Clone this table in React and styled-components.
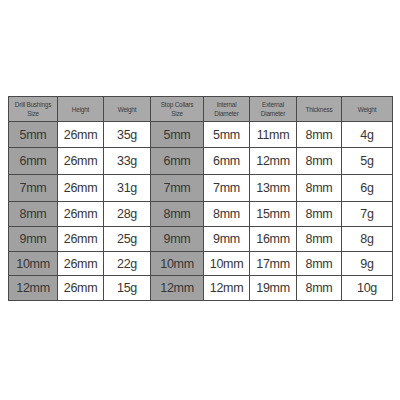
import React from 'react';
import styled, { createGlobalStyle } from 'styled-components';

const GlobalStyle = createGlobalStyle`
  html, body {
    margin: 0;
    padding: 0;
    background: #ffffff;
  }
  body {
    font-family: "Liberation Sans", Arial, sans-serif;
  }
`;

const Page = styled.div`
  width: 400px;
  height: 400px;
  padding: 96px 0 0 8px;
  box-sizing: border-box;
`;

const Table = styled.table`
  border-collapse: collapse;
  table-layout: fixed;
  width: 385px;
`;

const HeadCell = styled.th`
  background: #a9a9a9;
  border: 1px solid #4a4a4a;
  color: #3c3c3c;
  font-weight: normal;
  font-size: 6.4px;
  line-height: 9px;
  letter-spacing: -0.2px;
  text-align: center;
  height: 24px;
  padding: 0;
  width: ${(props) => props.w}px;
`;

const Cell = styled.td`
  background: ${(props) => (props.grey ? '#a1a1a1' : '#ffffff')};
  border: 1px solid #4a4a4a;
  color: #363636;
  font-size: 12.5px;
  text-align: center;
  padding: 0;
  height: ${(props) => props.h}px;
  letter-spacing: -0.3px;
`;

const headers = [
  { label: ['Drill Bushings', 'Size'], w: 48 },
  { label: ['Height'], w: 45 },
  { label: ['Weight'], w: 46 },
  { label: ['Stop Collars', 'Size'], w: 52 },
  { label: ['Internal', 'Diameter'], w: 45 },
  { label: ['External', 'Diameter'], w: 46 },
  { label: ['Thickness'], w: 44 },
  { label: ['Weight'], w: 50 },
];

const rows = [
  { h: 25, cells: ['5mm', '26mm', '35g', '5mm', '5mm', '11mm', '8mm', '4g'] },
  { h: 26, cells: ['6mm', '26mm', '33g', '6mm', '6mm', '12mm', '8mm', '5g'] },
  { h: 26, cells: ['7mm', '26mm', '31g', '7mm', '7mm', '13mm', '8mm', '6g'] },
  { h: 24, cells: ['8mm', '26mm', '28g', '8mm', '8mm', '15mm', '8mm', '7g'] },
  { h: 24, cells: ['9mm', '26mm', '25g', '9mm', '9mm', '16mm', '8mm', '8g'] },
  { h: 23, cells: ['10mm', '26mm', '22g', '10mm', '10mm', '17mm', '8mm', '9g'] },
  { h: 24, cells: ['12mm', '26mm', '15g', '12mm', '12mm', '19mm', '8mm', '10g'] },
];

const greyCols = [0, 3];

export default function App() {
  return (
    <Page>
      <GlobalStyle />
      <Table>
        <thead>
          <tr>
            {headers.map((col, i) => (
              <HeadCell key={i} w={col.w}>
                {col.label.map((line, j) => (
                  <div key={j}>{line}</div>
                ))}
              </HeadCell>
            ))}
          </tr>
        </thead>
        <tbody>
          {rows.map((row, r) => (
            <tr key={r}>
              {row.cells.map((value, c) => (
                <Cell key={c} h={row.h} grey={greyCols.includes(c)}>
                  {value}
                </Cell>
              ))}
            </tr>
          ))}
        </tbody>
      </Table>
    </Page>
  );
}
